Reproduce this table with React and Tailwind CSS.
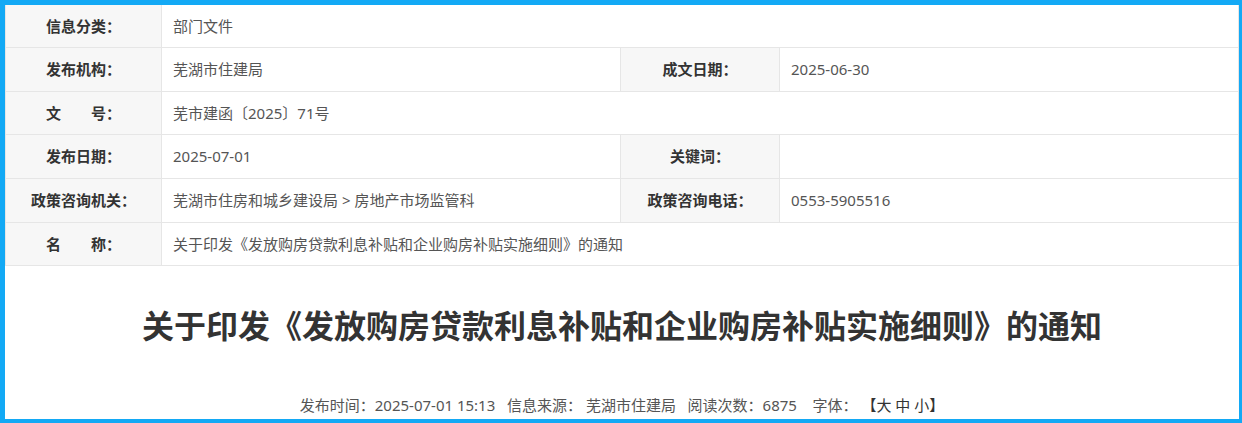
import React from "react";

const font = { fontFamily: '"Noto Sans", "Noto Sans CJK SC", sans-serif' };

function L({ children, className = "" }) {
  return (
    <td className={`bg-[#f7f7f7] border border-[#e6e6e6] text-center font-bold text-[#333] text-[15px] ${className}`}>
      {children}
    </td>
  );
}
function V({ children, colSpan, className = "" }) {
  return (
    <td colSpan={colSpan} className={`border border-[#e6e6e6] pl-[11px] text-[#555] text-[15px] ${className}`}>
      {children}
    </td>
  );
}

export default function App() {
  return (
    <div style={font} className="w-[1242px] h-[423px] bg-white border-t-[5px] border-l-[5px] border-r-[3px] border-b-[4px] border-[#13a9f5] overflow-hidden">
      <table className="w-full border-collapse table-fixed -mt-px">
        <colgroup>
          <col className="w-[156px]" />
          <col className="w-[459px]" />
          <col className="w-[159px]" />
          <col />
        </colgroup>
        <tbody>
          <tr className="h-[43px]">
            <L>信息分类：</L>
            <V colSpan={3}>部门文件</V>
          </tr>
          <tr className="h-[44px]">
            <L>发布机构：</L>
            <V>芜湖市住建局</V>
            <L>成文日期：</L>
            <V>2025-06-30</V>
          </tr>
          <tr className="h-[43px]">
            <L>文　　号：</L>
            <V colSpan={3}>芜市建函〔2025〕71号</V>
          </tr>
          <tr className="h-[44px]">
            <L>发布日期：</L>
            <V>2025-07-01</V>
            <L>关键词：</L>
            <V></V>
          </tr>
          <tr className="h-[44px]">
            <L>政策咨询机关：</L>
            <V>芜湖市住房和城乡建设局 &gt; 房地产市场监管科</V>
            <L>政策咨询电话：</L>
            <V>0553-5905516</V>
          </tr>
          <tr className="h-[43px]">
            <L>名　　称：</L>
            <V colSpan={3}>关于印发《发放购房贷款利息补贴和企业购房补贴实施细则》的通知</V>
          </tr>
        </tbody>
      </table>
      <div className="flex flex-col items-center">
        <h1 className="mt-[40px] text-[32px] leading-[40px] font-bold text-[#333]">
          关于印发《发放购房贷款利息补贴和企业购房补贴实施细则》的通知
        </h1>
        <div className="mt-[49px] text-[15px] leading-[20px] text-[#555] whitespace-pre">
          发布时间：2025-07-01 15:13{"   "}信息来源： 芜湖市住建局{"   "}阅读次数：6875{"    "}字体： <span className="text-[#333]">【大 中 小】</span>
        </div>
      </div>
    </div>
  );
}
